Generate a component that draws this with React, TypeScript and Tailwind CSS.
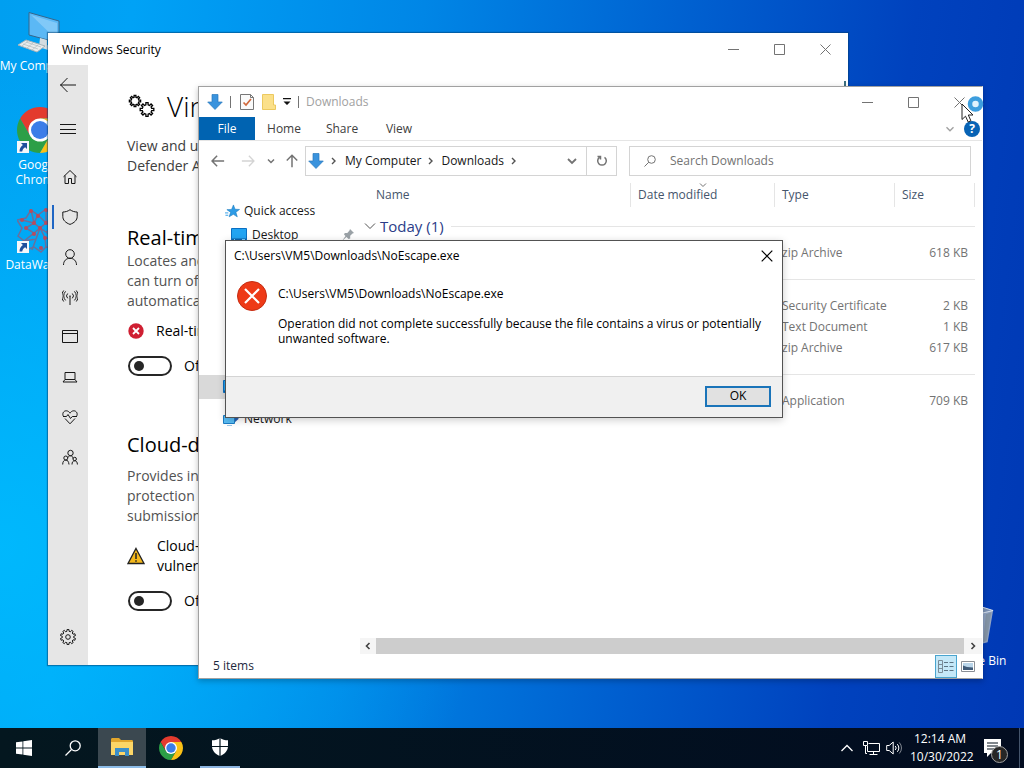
import type { ReactNode } from "react";

const FONT = "font-['Open_Sans','Noto_Sans',sans-serif]";

const FILES = [
  { group: "Today (1)", rows: [{ type: "zip Archive", size: "618 KB" }] },
  {
    group: "",
    rows: [
      { type: "Security Certificate", size: "2 KB" },
      { type: "Text Document", size: "1 KB" },
      { type: "zip Archive", size: "617 KB" },
    ],
  },
  { group: "", rows: [{ type: "Application", size: "709 KB" }] },
];

function gear(cx: number, cy: number, inner: number, outer: number, teeth: number) {
  const points: string[] = [];
  const step = (Math.PI * 2) / teeth;
  for (let i = 0; i < teeth; i++) {
    const a = i * step;
    const corners: [number, number][] = [
      [-0.3, inner],
      [-0.2, outer],
      [0.2, outer],
      [0.3, inner],
    ];
    corners.forEach(([k, r]) => {
      points.push(`${(cx + r * Math.sin(a + k * step)).toFixed(2)} ${(cy - r * Math.cos(a + k * step)).toFixed(2)}`);
    });
  }
  return `M${points.join("L")}Z`;
}

type IconProps = { className?: string; children?: ReactNode; box?: string };

function Line({ className = "size-4", children, box = "0 0 16 16" }: IconProps) {
  return (
    <svg className={className} viewBox={box} fill="none" stroke="currentColor" aria-hidden="true">
      {children}
    </svg>
  );
}

function ChromeLogo({ className = "" }: { className?: string }) {
  return (
    <svg className={className} viewBox="2 2 44 44" aria-hidden="true">
      <path fill="#e33b2e" d="M4.95 13A22 22 0 0 1 43.05 13H24L14.47 29.5Z" />
      <path fill="#2c9f47" d="M4.95 13A22 22 0 0 0 24 46L33.53 29.5H14.47Z" />
      <path fill="#fbc116" d="M24 46A22 22 0 0 0 43.05 13H24L33.53 29.5Z" />
      <circle cx="24" cy="24" r="11" fill="#fff" />
      <circle cx="24" cy="24" r="8.6" fill="#3b7de8" />
    </svg>
  );
}

function ShortcutArrow() {
  return (
    <svg className="absolute bottom-0 left-0 size-3" viewBox="0 0 12 12" aria-hidden="true">
      <path fill="#f4f6fa" d="M0 0h12v12H0z" />
      <path fill="#1f4f9c" d="M4 2h6v6L8.200 6.200C6.500 7.200 5.500 8.500 5.200 10.500H2.500C2.500 7.500 3.800 5.400 5.900 3.900Z" />
    </svg>
  );
}

function DownArrow({ className = "" }: { className?: string }) {
  return (
    <svg className={className} viewBox="0 0 16 16" aria-hidden="true">
      <path fill="#3a93dd" stroke="#2878bd" strokeWidth=".7" d="M5 .5h6V8h4.300L8 15.500.700 8H5Z" />
    </svg>
  );
}

function Monitor({ className = "" }: { className?: string }) {
  return (
    <svg className={className} viewBox="0 0 16 14" aria-hidden="true">
      <path fill="#22a4f2" stroke="#0a6fc2" d="M.5.500h15v12H.500z" />
      <path fill="#0b62ad" d="M1 10.500h14V12H1z" />
      <path fill="#7fd0ff" d="M3 11h1v1H3zM11 11h3v1h-3z" />
    </svg>
  );
}

function WindowButtons() {
  return (
    <div className="flex h-[30px] text-neutral-500">
      <button type="button" aria-label="Minimize" className="flex w-[46px] items-center justify-center">
        <Line className="h-[11px] w-[11px]" box="0 0 11 11"><path d="M0 5.500h11" /></Line>
      </button>
      <button type="button" aria-label="Maximize" className="flex w-[46px] items-center justify-center">
        <Line className="h-[11px] w-[11px]" box="0 0 11 11"><path d="M.5.500h10v10H.500z" /></Line>
      </button>
      <button type="button" aria-label="Close" className="flex w-[46px] items-center justify-center">
        <Line className="h-[11px] w-[11px]" box="0 0 11 11"><path d="M.5.500l10 10M10.500.500l-10 10" /></Line>
      </button>
    </div>
  );
}

const SIDE_ICONS: { label: string; art: ReactNode }[] = [
  { label: "Home", art: <path d="M1.500 7.800 8 1.500l6.500 6.300M3 6.500v8h3.500V9.500h3v5H13v-8" /> },
  { label: "Virus & threat protection", art: <path d="M8 .700C5.800 2.300 3.500 3 .800 3v4.500c0 3.600 2.800 6.300 7.200 7.900 4.400-1.600 7.200-4.300 7.200-7.900V3C12.500 3 10.200 2.300 8 .700Z" /> },
  { label: "Account protection", art: <><circle cx="8" cy="5" r="4.300" /><path d="M1.500 16c0-4 2.600-6.700 6.500-6.700s6.500 2.700 6.500 6.700" /></> },
  { label: "Firewall & network protection", art: <path d="M8 7v9M5.700 9.300a3.300 3.300 0 0 1 0-4.800M10.300 9.300a3.300 3.300 0 0 0 0-4.800M3.600 11.400a6.300 6.300 0 0 1 0-9M12.400 11.400a6.300 6.300 0 0 0 0-9M1.700 12.500a8.700 8.700 0 0 1 0-11M14.300 12.500a8.700 8.700 0 0 0 0-11M7.400 7h1.200" /> },
  { label: "App & browser control", art: <path d="M.5 1.500h15v12H.500zM.500 4.500h15" /> },
  { label: "Device security", art: <path d="M3 3.500h10v7H3zM3 10.500l-2 2.500h14l-2-2.500" /> },
  { label: "Device performance & health", art: <path d="M1.800 8C-.300 5 1.300 1.800 4.200 1.800 6 1.800 7.300 3 8 4.200 8.700 3 10 1.800 11.800 1.800c2.900 0 4.500 3.200 2.400 6.200M1 7.500h3.500l1.500-2 2.500 4 1.800-2h4.500M3 9.500l5 5.300 5-5.300" /> },
  { label: "Family options", art: <><circle cx="8.500" cy="4" r="2.700" /><circle cx="3.800" cy="9" r="2" /><circle cx="12.700" cy="10" r="1.700" /><path d="M.700 15.500c0-3 1.200-4.400 3.100-4.400s2.900 1.400 3.200 4.400M6 8.500c.5-1.200 1.300-1.700 2.400-1.700 1.700 0 2.500 1 2.500 2.700M10 15.500c0-2.400 1-3.700 2.700-3.700s2.700 1.300 2.700 3.700" /></> },
];

function Toggle({ label }: { label: string }) {
  return (
    <label className="ml-px flex h-5 items-center gap-3 text-black">
      <input type="checkbox" role="switch" aria-label={label} className="peer sr-only" />
      <span className="flex h-5 w-11 shrink-0 items-center rounded-full border-2 border-neutral-800 px-1">
        <span className="size-2.5 rounded-full bg-neutral-800" />
      </span>
      Off
    </label>
  );
}

function SecurityWindow() {
  return (
    <section className="absolute top-[33px] right-[176px] bottom-[63px] left-12 flex flex-col bg-white shadow-[0_0_1px_1px_rgba(0,60,110,0.5)]">
      <header className="flex h-8 shrink-0 items-center justify-between pl-[14px]">
        <h2 className="pt-[2px] text-xs text-black">Windows Security</h2>
        <WindowButtons />
      </header>
      <div className="flex min-h-0 flex-1">
        <nav className="flex w-10 shrink-0 flex-col bg-[#e6e6e6] text-neutral-900">
          <button type="button" aria-label="Back" className="flex h-10 items-center justify-center">
            <Line><path d="M0 8h16M7.500 1 .700 8l6.800 7" /></Line>
          </button>
          <button type="button" aria-label="Menu" className="mt-1 mb-2 flex h-10 items-center justify-center">
            <Line><path d="M0 3.500h16M0 8.500h16M0 12.500h16" strokeWidth="1.200" /></Line>
          </button>
          {SIDE_ICONS.map((item, i) => (
            <button key={item.label} type="button" aria-label={item.label} className="flex h-10 items-center">
              <span className={i === 1 ? "mr-2 ml-1 h-6 w-[2px] bg-[#1f66c4]" : "mr-2 ml-1 h-6 w-[2px]"} />
              <Line>{item.art}</Line>
            </button>
          ))}
          <button type="button" aria-label="Settings" className="mt-auto mb-2 flex h-10 items-center justify-center">
            <Line>
              <path d={gear(8, 8, 5.800, 7.600, 10)} />
              <circle cx="8" cy="8" r="2.300" />
            </Line>
          </button>
        </nav>
        <div className="min-w-0 flex-1 pt-[19px] pl-[39px] text-sm leading-5 whitespace-nowrap text-neutral-600">
          <h1 className="flex h-11 items-center gap-3 text-[28px] font-light text-black">
            <Line className="h-6 w-7" box="0 0 28 24">
              <path d={gear(8, 7, 3.900, 5.700, 8)} strokeWidth="1.300" />
              <path d={gear(20, 15.500, 4.800, 6.900, 8)} strokeWidth="1.300" />
            </Line>
            Virus
          </h1>
          <p className="mt-2 text-neutral-700">
            View and update
            <br />
            Defender Antivirus
          </p>
          <h2 className="mt-[50px] text-xl leading-6 text-black">Real-time</h2>
          <p className="mt-px">
            Locates and
            <br />
            can turn off
            <br />
            automatically
          </p>
          <p className="mt-[10px] flex items-center gap-3 text-black">
            <svg className="ml-px size-4" viewBox="0 0 16 16" aria-hidden="true">
              <circle cx="8" cy="8" r="7.700" fill="#cf1f32" />
              <path d="M5 5l6 6M11 5l-6 6" stroke="#fff" strokeWidth="1.800" />
            </svg>
            Real-time
          </p>
          <div className="mt-[15px]"><Toggle label="Real-time protection" /></div>
          <h2 className="mt-[57px] text-xl leading-6 text-black">Cloud-delivered</h2>
          <p className="mt-[9px]">
            Provides in
            <br />
            protection
            <br />
            submission
          </p>
          <div className="mt-[10px] flex items-center gap-3 text-black">
            <svg className="size-[18px]" viewBox="0 0 18 18" aria-hidden="true">
              <path d="M9 1.500 17 16.500H1Z" fill="#f4b81c" stroke="#222" strokeWidth="1.300" />
              <path d="M9 6v6M9 13.200v1.500" stroke="#222" strokeWidth="1.500" />
            </svg>
            <p>
              Cloud-delivered
              <br />
              vulnerable
            </p>
          </div>
          <div className="mt-[15px]"><Toggle label="Cloud-delivered protection" /></div>
        </div>
        <div className="mt-4 mr-[2px] h-8 w-[2px] bg-[#3d6f80]" />
      </div>
    </section>
  );
}

function ExplorerTitle() {
  return (
    <header className="flex h-[30px] shrink-0 items-center justify-between pl-2">
      <div className="flex items-center">
        <DownArrow className="size-4" />
        <span className="mx-[7px] h-3 w-px bg-neutral-500" />
        <svg className="ml-[2px] h-4 w-[14px]" viewBox="0 0 14 16" aria-hidden="true">
          <path d="M.5.500h10l3 3v12H.500z" fill="#fafafa" stroke="#777" />
          <path d="M10.500.500v3h3" fill="none" stroke="#777" />
          <path d="M3.500 8.500 6 11l5-6" fill="none" stroke="#d0693c" strokeWidth="1.700" />
        </svg>
        <svg className="ml-2 h-4 w-[14px]" viewBox="0 0 14 16" aria-hidden="true">
          <path d="M.5.500h11V11h2v4.500H.500z" fill="#fbe08a" stroke="#ecc95f" />
        </svg>
        <svg className="ml-[7px] h-2 w-2" viewBox="0 0 8 8" aria-hidden="true">
          <path d="M0 0h8v1.300H0zM.500 3.500h7L4 7z" fill="#111" />
        </svg>
        <span className="mx-[7px] h-3 w-px bg-neutral-500" />
        <h2 className="text-xs text-neutral-400">Downloads</h2>
      </div>
      <WindowButtons />
    </header>
  );
}

function Ribbon() {
  return (
    <div className="flex h-6 shrink-0 items-center border-b border-neutral-200 text-xs text-neutral-700">
      <button type="button" className="h-full w-14 bg-[#0063b1] text-white">File</button>
      <button type="button" className="h-full w-[58px]">Home</button>
      <button type="button" className="h-full w-[58px]">Share</button>
      <button type="button" className="h-full w-[56px]">View</button>
      <button type="button" aria-label="Expand ribbon" className="ml-auto text-neutral-400">
        <Line className="size-2" box="0 0 8 8"><path d="M.5 2.200 4 5.700l3.500-3.500" strokeWidth="1.400" /></Line>
      </button>
      <button type="button" aria-label="Help" className="mr-[2px] ml-[10px] size-4 rounded-full bg-[#0863b5] text-xs leading-4 font-bold text-white">
        ?
      </button>
    </div>
  );
}

function Crumb() {
  return (
    <Line className="h-2 w-1.5 text-neutral-600" box="0 0 6 8"><path d="M1 1l3 3-3 3" strokeWidth="1.400" /></Line>
  );
}

function AddressRow() {
  return (
    <div className="flex shrink-0 items-center pt-[5px] pr-[11px] pl-3 text-xs">
      <button type="button" aria-label="Back" className="text-neutral-500">
        <Line className="size-3.5"><path d="M1 8h14M7 2 1.200 8 7 14" strokeWidth="1.700" /></Line>
      </button>
      <button type="button" aria-label="Forward" className="ml-4 text-neutral-300">
        <Line className="size-3.5"><path d="M1 8h14M9 2l5.800 6L9 14" strokeWidth="1.500" /></Line>
      </button>
      <button type="button" aria-label="Recent locations" className="ml-3 text-neutral-500">
        <Line className="size-2" box="0 0 8 8"><path d="M1 2.500 4 5.500l3-3" strokeWidth="1.500" /></Line>
      </button>
      <button type="button" aria-label="Up" className="ml-[10px] text-neutral-500">
        <Line className="size-3.5"><path d="M8 15V2M2 7.500 8 1.500l6 6" strokeWidth="1.700" /></Line>
      </button>
      <div className="ml-[6px] flex h-[30px] min-w-0 flex-1 items-center border border-neutral-300 pl-[2px] text-neutral-900">
        <DownArrow className="size-4" />
        <span className="ml-[7px]"><Crumb /></span>
        <a href="#computer" className="ml-[8px]">My Computer</a>
        <span className="ml-[7px]"><Crumb /></span>
        <a href="#downloads" className="ml-[7px]">Downloads</a>
        <span className="ml-[7px]"><Crumb /></span>
        <button type="button" aria-label="Previous locations" className="mr-[9px] ml-auto text-neutral-500">
          <Line className="size-2.5" box="0 0 10 10"><path d="M1 3l4 4 4-4" strokeWidth="1.800" /></Line>
        </button>
        <button type="button" aria-label="Refresh" className="flex h-full w-[30px] items-center justify-center border-l border-neutral-300 text-neutral-500">
          <Line className="size-3" box="0 0 12 12"><path d="M8.500 2.300a4.300 4.300 0 1 1-5 0M1.500 1.500h3v3" strokeWidth="1.500" /></Line>
        </button>
      </div>
      <label className="ml-3 flex h-[30px] w-[342px] items-center border border-neutral-300 pl-[14px]">
        <Line className="size-3 shrink-0 text-neutral-500" box="0 0 12 12"><circle cx="7.500" cy="4.500" r="3.800" /><path d="M4.800 7.200.500 11.500" /></Line>
        <span className="sr-only">Search</span>
        <input type="text" placeholder="Search Downloads" className="ml-[14px] min-w-0 flex-1 text-xs outline-none placeholder:text-neutral-500" />
      </label>
    </div>
  );
}

function Sidebar() {
  return (
    <nav className="w-[161px] shrink-0 pt-[17px] text-xs text-neutral-900">
      <div className="h-[168px]">
        <a href="#quick" className="flex h-6 items-center pl-[26px]">
          <svg className="mr-[4px] size-[15px]" viewBox="0 0 16 16" aria-hidden="true">
            <path d="M9 1l1.700 4.600 4.800.200-3.900 3 1.500 4.900L8.900 11l-4.500 2.700 1.600-4.800L2 6l5-.200Z" fill="#2d9be6" stroke="#1477bd" strokeWidth=".6" />
            <path d="M0 9.500h3.500M.500 12h3" stroke="#2d9be6" />
          </svg>
          Quick access
        </a>
        <a href="#desktop" className="flex h-6 items-center pr-[5px] pl-8">
          <Monitor className="mr-[5px] h-[14px] w-4" />
          Desktop
          <svg className="ml-auto size-3.5" viewBox="0 0 14 14" aria-hidden="true">
            <path d="M9 1l4 4-1.500.500-2.300 2.300v2.700L7.500 11 5.500 9 1 13l3.500-5L3 6.500 3.800 5h2.500l2.200-2.500Z" fill="#9aa1a6" />
          </svg>
        </a>
      </div>
      <a href="#computer" aria-label="My Computer" className="mt-2 flex h-6 items-center bg-[#d9d9d9] pl-6">
        <Monitor className="h-[14px] w-4" />
      </a>
      <a href="#network" className="mt-2 flex h-6 items-center pl-6">
        <svg className="mr-[5px] h-[14px] w-4" viewBox="0 0 16 14" aria-hidden="true">
          <path d="M10 1.500 15.500 1v6L11 11Z" fill="#2a5fb0" />
          <path d="M.5 3.500h11v8H.500z" fill="#59bdf5" stroke="#1b7cc4" />
          <path d="M4 13.500h5" stroke="#9cc8e8" />
        </svg>
        Network
      </a>
    </nav>
  );
}

function FileTable() {
  return (
    <table className="mt-px w-full table-fixed text-left text-xs text-neutral-500">
      <colgroup>
        <col />
        <col className="w-36" />
        <col className="w-[120px]" />
        <col className="w-20" />
      </colgroup>
      <thead className="text-slate-600">
        <tr className="h-[27px] align-top">
          <th className="font-normal"><span className="block h-6 border-r border-neutral-200 pl-4 leading-6">Name</span></th>
          <th className="font-normal">
            <span className="relative block h-6 border-r border-neutral-200 pl-[7px] leading-6">
              Date modified
              <Line className="absolute top-0 left-1/2 -ml-1 size-2 text-neutral-500" box="0 0 8 8"><path d="M1 .500 4 3.500 7 .500" /></Line>
            </span>
          </th>
          <th className="font-normal"><span className="block h-6 border-r border-neutral-200 pl-[7px] leading-6">Type</span></th>
          <th className="font-normal"><span className="block h-6 border-r border-neutral-200 pl-[7px] leading-6">Size</span></th>
        </tr>
      </thead>
      {FILES.map((section, i) => (
        <tbody key={i}>
          <tr className="h-8">
            <th colSpan={4} className="font-normal">
              <span className="flex items-center gap-[4px] pl-[4px] text-[15px] leading-5 text-[#2b3c88]">
                <Line className="h-3 w-3 text-neutral-600" box="0 0 12 12"><path d="M1 3.500l5 5 5-5" /></Line>
                {section.group}
                <span className="ml-[3px] h-px flex-1 bg-neutral-200" />
              </span>
            </th>
          </tr>
          {section.rows.map((row) => (
            <tr key={row.type} className="h-[21px]">
              <td />
              <td />
              <td className="pl-[7px]">{row.type}</td>
              <td className="pr-[7px] text-right">{row.size}</td>
            </tr>
          ))}
        </tbody>
      ))}
    </table>
  );
}

function ExplorerWindow() {
  return (
    <section className="absolute top-[86px] right-[41px] bottom-[49px] left-[198px] flex flex-col border border-neutral-400 border-r-white bg-white shadow-[0_2px_6px_rgba(0,0,0,0.25)]">
      <ExplorerTitle />
      <Ribbon />
      <AddressRow />
      <div className="flex min-h-0 flex-1 pt-[6px]">
        <Sidebar />
        <div className="flex min-w-0 flex-1 flex-col">
          <div className="min-h-0 flex-1 overflow-hidden pr-[7px]"><FileTable /></div>
          <div className="flex h-4 shrink-0 items-center bg-neutral-100 text-neutral-700">
            <button type="button" aria-label="Scroll left" className="flex w-4 justify-center">
              <Line className="size-2" box="0 0 8 8"><path d="M5.500 1l-3 3 3 3" strokeWidth="1.600" /></Line>
            </button>
            <div className="h-full flex-1 bg-[#cdcdcd]" />
            <button type="button" aria-label="Scroll right" className="flex w-[18px] justify-center">
              <Line className="size-2" box="0 0 8 8"><path d="M2.500 1l3 3-3 3" strokeWidth="1.600" /></Line>
            </button>
          </div>
        </div>
      </div>
      <footer className="flex h-6 shrink-0 items-center pr-[3px] pl-[14px] text-xs text-slate-800">
        5 items
        <button type="button" aria-label="Details view" className="ml-auto flex h-[23px] w-[22px] items-center justify-center border border-[#4aa5cf] bg-[#c4e8f8]">
          <Line className="h-[13px] w-4" box="0 0 16 13">
            <path d="M.5.500h4v12h-4zM.500 4.500h4M.500 8.500h4" stroke="#7a8c98" />
            <path d="M6 2.500h4M11.500 2.500h4M6 6.500h4M11.500 6.500h4M6 10.500h4M11.500 10.500h4" stroke="#5d7484" />
          </Line>
        </button>
        <button type="button" aria-label="Large icons view" className="flex w-[22px] justify-center">
          <svg className="h-[11px] w-3.5" viewBox="0 0 14 11" aria-hidden="true">
            <path d="M.5.500h13v10H.500z" fill="#fff" stroke="#8a8f96" />
            <path d="M2 2h10v7H2z" fill="#b9d5ea" />
            <path d="M2 4.500l4 1.500 6 .500V9H2z" fill="#3f5a78" />
          </svg>
        </button>
      </footer>
    </section>
  );
}

function ErrorDialog() {
  return (
    <section role="alertdialog" aria-labelledby="dialog-title" className="absolute top-60 left-[225px] w-[558px] border border-neutral-600 bg-white text-xs text-black shadow-[0_2px_8px_rgba(0,0,0,0.2)]">
      <header className="flex h-[30px] items-center justify-between pr-[9px] pl-2">
        <h2 id="dialog-title">C:\Users\VM5\Downloads\NoEscape.exe</h2>
        <button type="button" aria-label="Close">
          <Line className="h-3 w-3" box="0 0 12 12"><path d="M.700.700l10.600 10.600M11.300.700.700 11.300" strokeWidth="1.200" /></Line>
        </button>
      </header>
      <div className="flex h-[105px] gap-[11px] pt-[10px] pl-[11px]">
        <svg className="size-[30px] shrink-0" viewBox="0 0 30 30" aria-hidden="true">
          <circle cx="15" cy="15" r="14.500" fill="#ee3a17" stroke="#c52c12" />
          <path d="M8 8l14 14M22 8 8 22" stroke="#fff" strokeWidth="2.200" />
        </svg>
        <div className="pt-[5px] leading-[15px]">
          <p>C:\Users\VM5\Downloads\NoEscape.exe</p>
          <p className="mt-[15px]">
            Operation did not complete successfully because the file contains a virus or potentially
            <br />
            unwanted software.
          </p>
        </div>
      </div>
      <footer className="flex h-[41px] items-center justify-end border-t border-neutral-300 bg-[#f0f0f0] pr-[11px] pb-[2px]">
        <button type="button" className="h-[21px] w-[66px] border-2 border-[#1a74b9] bg-[#e1e1e1] leading-4">OK</button>
      </footer>
    </section>
  );
}

function DesktopIcons() {
  return (
    <>
      <div className="absolute top-2.5 left-0 flex w-[76px] flex-col items-center text-center text-xs leading-[15px] whitespace-nowrap text-white">
        <svg className="h-12 w-11" viewBox="0 0 44 48" aria-hidden="true">
          <path d="M13 2.500 43 11v22L13 25Z" fill="#5bb8f5" stroke="#35668c" />
          <path d="M15 5l26 8v17Z" fill="#9bd4fa" opacity=".6" />
          <path d="M24 28l7 2v5l9 3-5 3-12-4Z" fill="#d4dce0" />
          <path d="M10 30l19 6-8 6L2 35Z" fill="#e9ecec" stroke="#a8b4ba" />
          <path d="M7 34l15 5M10 32l15 5M12 31l-6 5M17 33l-6 5M22 35l-6 5" stroke="#b2bbc0" strokeWidth=".7" />
        </svg>
        <span>My Computer</span>
        <span className="relative mt-[34px] ml-1">
          <ChromeLogo className="size-[46px]" />
          <ShortcutArrow />
        </span>
        <span className="mt-[4px]">
          Google
          <br />
          Chrome
        </span>
        <span className="relative mt-5 ml-1">
          <svg className="size-[46px]" viewBox="0 0 46 46" fill="none" aria-hidden="true">
            <g stroke="#6b6f9c" strokeWidth="1.500">
              <path d="M14 3l7 5 8-6 6 7 8 3-5 8 6 7-7 5 1 9-9-1-5 5-7-5-8 3-2-9-6-5 4-8-5-8 9-2Z" />
              <path d="M14 3l3 13 4-8 8 8 0-14M35 9l-6 7 9 4-9 5 8 7-9-1 1 10M5 13l12 3-8 5 8 5-10 8 12-2-4 11M17 16l6 5 6-5M17 26l6-5 6 4M19 32l4-11 5 10" />
            </g>
            <g fill="#b84c5e">
              <circle cx="14" cy="4" r="2" /><circle cx="29" cy="3" r="2" /><circle cx="21" cy="9" r="2" />
              <circle cx="36" cy="10" r="2" /><circle cx="5" cy="13" r="2" /><circle cx="17" cy="16" r="2" />
              <circle cx="29" cy="16" r="2" /><circle cx="9" cy="21" r="2" /><circle cx="23" cy="21" r="2" />
              <circle cx="17" cy="27" r="2" /><circle cx="28" cy="31" r="2" /><circle cx="24" cy="41" r="2" />
            </g>
          </svg>
          <ShortcutArrow />
        </span>
        <span className="mt-[4px]">DataWagon</span>
      </div>
      <div className="absolute right-[11px] bottom-[60px] flex w-[76px] flex-col items-center text-xs leading-[15px] text-white">
        <svg className="h-12 w-[38px]" viewBox="0 0 42 48" aria-hidden="true">
          <path d="M3 7l17 5 21-4-6 35-15 4L8 42Z" fill="#a9b6c6" opacity=".85" />
          <path d="M3 7 22 2l19 6-21 5Z" fill="#7d93b5" stroke="#e4ebf3" />
          <path d="M33 12l6-2-5 31-4 2Z" fill="#8494a6" />
        </svg>
        <span className="mt-1">Recycle Bin</span>
      </div>
    </>
  );
}

function Taskbar() {
  return (
    <footer className="flex h-10 shrink-0 items-stretch gap-px bg-linear-to-r from-[#04171f] to-[#020c20] text-white">
      <button type="button" aria-label="Start" className="flex w-12 items-center justify-center">
        <svg className="size-4" viewBox="0 0 16 16" fill="#fff" aria-hidden="true">
          <path d="M0 2.300 6.500 1.400V7.600H0zM7.300 1.300 16 0v7.600H7.300zM0 8.400h6.500v6.200L0 13.700zM7.300 8.400H16V16l-8.700-1.300z" />
        </svg>
      </button>
      <button type="button" aria-label="Search" className="flex w-12 items-center justify-center">
        <Line><circle cx="10.200" cy="5.800" r="5" strokeWidth="1.300" /><path d="M6.500 9.500.500 15.500" strokeWidth="1.300" /></Line>
      </button>
      <button type="button" aria-label="File Explorer" className="flex w-12 items-center justify-center border-b-2 border-[#8cbce8] bg-[#3b4850]">
        <svg className="h-[18px] w-[22px]" viewBox="0 0 22 18" aria-hidden="true">
          <path d="M0 1.500C0 .700.500 0 1.500 0H8l2 2h10.500c1 0 1.500.500 1.500 1.500V17H0z" fill="#e2a62c" />
          <path d="M0 4h22v13H0z" fill="#fcd667" />
          <path d="M4 10h14v8h-4v-4H8v4H4z" fill="#3c8fc9" />
        </svg>
      </button>
      <button type="button" aria-label="Google Chrome" className="flex w-12 items-center justify-center">
        <ChromeLogo className="size-6" />
      </button>
      <button type="button" aria-label="Windows Security" className="flex w-12 justify-center">
        <span className="flex h-full w-10 items-center justify-center border-b-2 border-[#8cb4e0]">
          <svg className="h-[18px] w-4" viewBox="0 0 16 18" aria-hidden="true">
            <path d="M8 0C5.800 1.600 3 2.300 0 2.300V8c0 4.500 3 8 8 10 5-2 8-5.500 8-10V2.300C13 2.300 10.200 1.600 8 0Z" fill="#fff" />
            <path d="M8 0v18M0 8.500h16" stroke="#04151e" strokeWidth="1.200" />
          </svg>
        </span>
      </button>
      <div className="ml-auto flex items-center">
        <button type="button" aria-label="Show hidden icons">
          <Line className="h-3 w-3" box="0 0 12 12"><path d="M.500 9 6 3.500 11.500 9" strokeWidth="1.300" /></Line>
        </button>
        <Line className="ml-[10px] h-4 w-[17px]" box="0 0 17 16">
          <path d="M5.500 3.500h11v8H4.500V6M.500 1.500h4v4h-4zM2.500 5.500v8H4M10.500 11.500v3M6.500 14.500h8" />
        </Line>
        <Line className="ml-[6px] h-4 w-4" box="0 0 16 16">
          <path d="M.700 5.500h2.500l4-3.500v12l-4-3.500H.700zM9.300 6a3 3 0 0 1 0 4M11.300 4.200a5.500 5.500 0 0 1 0 7.600" />
          <path d="M13.300 2.500a8 8 0 0 1 0 11" opacity=".5" />
        </Line>
        <time className="ml-2 w-[60px] text-center text-xs leading-[18px] whitespace-nowrap">
          12:14 AM
          <br />
          10/30/2022
        </time>
        <button type="button" aria-label="Notifications" className="relative mr-[18px] ml-[14px]">
          <svg className="h-[18px] w-[17px]" viewBox="0 0 17 18" aria-hidden="true">
            <path d="M0 0h17v14H7l-4 4v-4H0z" fill="#fff" />
            <path d="M3 4h11M3 7h11M3 10h8" stroke="#04101c" strokeWidth="1.200" />
          </svg>
          <span className="absolute top-[7px] left-[7px] flex size-[17px] items-center justify-center rounded-full border border-neutral-400 bg-neutral-800 text-xs leading-none">
            1
          </span>
        </button>
        <span className="mr-[4px] h-full w-px bg-slate-600" />
      </div>
    </footer>
  );
}

function BusyCursor() {
  return (
    <svg className="pointer-events-none absolute top-[94px] right-[40px] h-8 w-6" viewBox="0 0 24 32" aria-hidden="true">
      <circle cx="15.500" cy="10" r="5.500" fill="#dff2fd" stroke="#3d9ede" strokeWidth="4.500" />
      <path d="M2 10v15.500l3.500-3.300 2.700 5.800 2.700-1.200L8.300 21H13Z" fill="#fff" stroke="#222" />
    </svg>
  );
}

export default function App() {
  return (
    <div className={`${FONT} flex h-screen flex-col overflow-hidden bg-[linear-gradient(97deg,#009ff0_0%,#00a2f6_12%,#0086e6_38%,#0060d0_62%,#0042be_82%,#0038b4_100%)]`}>
      <main className="relative min-h-0 flex-1 bg-[radial-gradient(circle_at_0%_75%,rgba(0,190,255,0.8)_0%,rgba(0,190,255,0)_42%)]">
        <DesktopIcons />
        <SecurityWindow />
        <ExplorerWindow />
        <ErrorDialog />
        <BusyCursor />
      </main>
      <Taskbar />
    </div>
  );
}
